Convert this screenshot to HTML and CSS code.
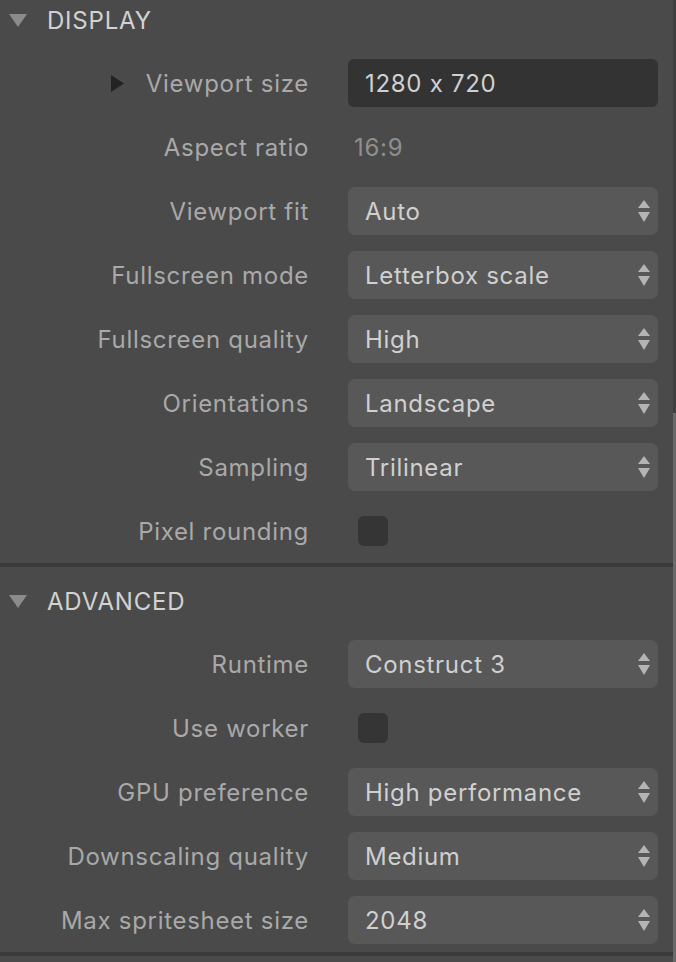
FILE: index.html
```html
<!DOCTYPE html>
<html>
<head>
<meta charset="utf-8">
<link rel="stylesheet" href="styles.css">
</head>
<body>
<div class="frame">
  <div class="panel">
    <section class="section">
      <div class="sec-head">
        <svg class="caret" width="18" height="13" viewBox="0 0 18 13"><path d="M0 0 H18 L9 13 Z"/></svg>
        <span class="sec-title">DISPLAY</span>
      </div>
      <div class="rows">
        <div class="row">
          <div class="label"><svg class="expander" width="13" height="17" viewBox="0 0 13 17"><path d="M0 0 L13 8.5 L0 17 Z"/></svg>Viewport size</div>
          <div class="input">1280 x 720</div>
        </div>
        <div class="row">
          <div class="label">Aspect ratio</div>
          <div class="static">16:9</div>
        </div>
        <div class="row">
          <div class="label">Viewport fit</div>
          <div class="select"><span>Auto</span><svg class="arrows" width="12" height="22" viewBox="0 0 12 22"><path d="M6 0 L12 8 H0 Z M0 12 H12 L6 22 Z"/></svg></div>
        </div>
        <div class="row">
          <div class="label">Fullscreen mode</div>
          <div class="select"><span>Letterbox scale</span><svg class="arrows" width="12" height="22" viewBox="0 0 12 22"><path d="M6 0 L12 8 H0 Z M0 12 H12 L6 22 Z"/></svg></div>
        </div>
        <div class="row">
          <div class="label">Fullscreen quality</div>
          <div class="select"><span>High</span><svg class="arrows" width="12" height="22" viewBox="0 0 12 22"><path d="M6 0 L12 8 H0 Z M0 12 H12 L6 22 Z"/></svg></div>
        </div>
        <div class="row">
          <div class="label">Orientations</div>
          <div class="select"><span>Landscape</span><svg class="arrows" width="12" height="22" viewBox="0 0 12 22"><path d="M6 0 L12 8 H0 Z M0 12 H12 L6 22 Z"/></svg></div>
        </div>
        <div class="row">
          <div class="label">Sampling</div>
          <div class="select"><span>Trilinear</span><svg class="arrows" width="12" height="22" viewBox="0 0 12 22"><path d="M6 0 L12 8 H0 Z M0 12 H12 L6 22 Z"/></svg></div>
        </div>
        <div class="row">
          <div class="label">Pixel rounding</div>
          <div class="checkwrap"><span class="check"></span></div>
        </div>
      </div>
    </section>
    <section class="section">
      <div class="sec-head">
        <svg class="caret" width="18" height="13" viewBox="0 0 18 13"><path d="M0 0 H18 L9 13 Z"/></svg>
        <span class="sec-title">ADVANCED</span>
      </div>
      <div class="rows">
        <div class="row">
          <div class="label">Runtime</div>
          <div class="select"><span>Construct 3</span><svg class="arrows" width="12" height="22" viewBox="0 0 12 22"><path d="M6 0 L12 8 H0 Z M0 12 H12 L6 22 Z"/></svg></div>
        </div>
        <div class="row">
          <div class="label">Use worker</div>
          <div class="checkwrap"><span class="check"></span></div>
        </div>
        <div class="row">
          <div class="label">GPU preference</div>
          <div class="select"><span>High performance</span><svg class="arrows" width="12" height="22" viewBox="0 0 12 22"><path d="M6 0 L12 8 H0 Z M0 12 H12 L6 22 Z"/></svg></div>
        </div>
        <div class="row">
          <div class="label">Downscaling quality</div>
          <div class="select"><span>Medium</span><svg class="arrows" width="12" height="22" viewBox="0 0 12 22"><path d="M6 0 L12 8 H0 Z M0 12 H12 L6 22 Z"/></svg></div>
        </div>
        <div class="row">
          <div class="label">Max spritesheet size</div>
          <div class="select"><span>2048</span><svg class="arrows" width="12" height="22" viewBox="0 0 12 22"><path d="M6 0 L12 8 H0 Z M0 12 H12 L6 22 Z"/></svg></div>
        </div>
      </div>
    </section>
  </div>
  <div class="scrollbar"><div class="thumb"></div></div>
</div>
</body>
</html>
```
FILE: styles.css
```css
html, body {
  margin: 0;
  padding: 0;
  background: #4a4a4a;
  height: 100%;
  overflow: hidden;
}
body {
  font-family: Inter, "Liberation Sans", Arial, sans-serif;
  font-size: 24px;
  letter-spacing: 0.7px;
  font-feature-settings: "calt" 0;
  color: #a9a9a9;
}
.frame {
  display: flex;
  height: 962px;
}
.panel {
  flex: 1;
  margin-top: -14px;
}
.section {
  border-bottom: 4px solid #3b3b3b;
}
.sec-head {
  height: 65px;
  display: flex;
  align-items: center;
  padding-top: 3px;
  box-sizing: border-box;
}
.caret {
  fill: #8b8b8b;
  margin-left: 9px;
  margin-right: 20px;
}
.sec-title {
  color: #d2d2d2;
  font-size: 24px;
  letter-spacing: 0.8px;
}
.rows {
  display: flex;
  flex-direction: column;
}
.row {
  height: 64px;
  display: grid;
  grid-template-columns: 308px 310px;
  column-gap: 40px;
  align-items: center;
}
.label {
  text-align: right;
  white-space: nowrap;
  display: flex;
  justify-content: flex-end;
  align-items: center;
  margin-right: -1px;
}
.expander {
  fill: #232323;
  margin-right: 22px;
}
.input {
  height: 48px;
  background: #333333;
  border-radius: 6px;
  color: #d0d0d0;
  display: flex;
  align-items: center;
  padding-left: 17px;
}
.static {
  color: #8e8e8e;
  padding-left: 6px;
}
.select {
  height: 48px;
  background: #585858;
  border-radius: 7px;
  color: #d0d0d0;
  display: flex;
  align-items: center;
  justify-content: space-between;
  padding-left: 17px;
  padding-right: 8px;
}
.arrows {
  fill: #b4b4b4;
}
.checkwrap {
  padding-left: 10px;
  display: flex;
  align-items: center;
}
.check {
  width: 30px;
  height: 30px;
  border-radius: 6px;
  background: #353535;
}
.scrollbar {
  width: 3px;
  background: #3f3f3f;
  display: flex;
  flex-direction: column;
  justify-content: flex-end;
}
.thumb {
  height: 549px;
  background: #6a6a6a;
}
```
